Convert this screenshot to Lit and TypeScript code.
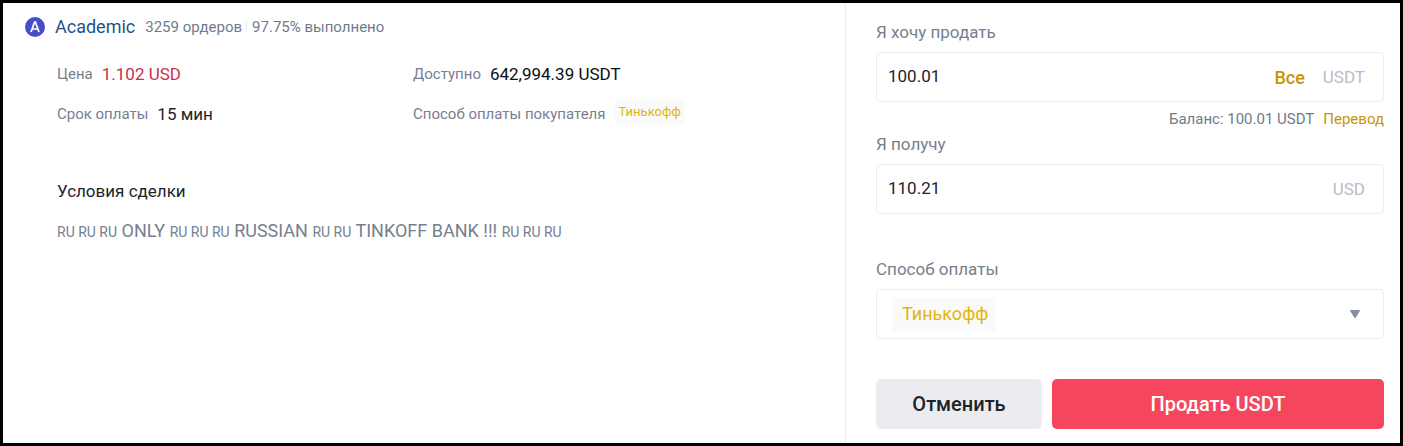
import { LitElement, html, css } from "lit";
import { customElement, state } from "lit/decorators.js";

const TERMS: { text: string; flag?: boolean }[] = [
  { text: "RU RU RU", flag: true },
  { text: "ONLY" },
  { text: "RU RU RU", flag: true },
  { text: "RUSSIAN" },
  { text: "RU RU", flag: true },
  { text: "TINKOFF BANK !!!" },
  { text: "RU RU RU", flag: true },
];

@customElement("offer-details")
export class OfferDetails extends LitElement {
  static styles = css`
    :host { display: block; padding: 12px 24px 24px 22px; }
    .head { display: flex; align-items: center; height: 24px; }
    .avatar { width: 20px; height: 20px; flex: none; margin-right: 10px; }
    .name { font-size: 18px; line-height: 24px; color: #1f5288; text-decoration: none; margin-right: 10px; }
    .stat { font-size: 15px; line-height: 24px; color: #707a8a; }
    .stat + .stat { display: flex; align-items: center; }
    .stat + .stat::before { content: ""; width: 1px; height: 10px; background: #e3e6ea; margin: 0 5px 0 4px; }
    .body { padding-left: 32px; }
    .facts { display: grid; grid-template-columns: minmax(0, 356fr) minmax(0, 408fr); row-gap: 16px; margin: 23px 0 0; }
    .fact { display: flex; align-items: center; gap: 9px; height: 24px; white-space: nowrap; }
    dt { font-size: 15px; line-height: 24px; color: #76808f; }
    dd { margin: 0; font-size: 17px; line-height: 24px; color: #1e2329; }
    .strong { color: #0b0e11; }
    .price { color: #c9304a; }
    .tag { font-size: 13px; padding: 0 4px; margin-top: -4px; line-height: 26px; background: #fafafa; color: #dfb60d; border-radius: 2px; }
    h2 { margin: 53px 0 16px; font-size: 17px; line-height: 24px; font-weight: 400; color: #1e2329; }
    p { margin: 0; font-size: 18px; line-height: 24px; color: #76808f; }
    .flag { font-size: 14px; }
  `;
  render() {
    return html`
      <div class="head">
        <svg class="avatar" viewBox="0 0 20 20" aria-hidden="true">
          <circle cx="10" cy="10" r="10" fill="#474dc9" />
          <path d="M6 15 9.6 5.2h.8L14 15M7.3 12h5.4" fill="none" stroke="#fff" stroke-width="1.7" />
        </svg>
        <a class="name" href="#academic">Academic</a>
        <span class="stat">3259 ордеров</span><span class="stat">97.75% выполнено</span>
      </div>
      <div class="body">
        <dl class="facts">
          <div class="fact"><dt>Цена</dt><dd class="price">1.102 USD</dd></div>
          <div class="fact"><dt>Доступно</dt><dd class="strong">642,994.39 USDT</dd></div>
          <div class="fact"><dt>Срок оплаты</dt><dd>15 мин</dd></div>
          <div class="fact"><dt>Способ оплаты покупателя</dt><dd class="tag">Тинькофф</dd></div>
        </dl>
        <h2>Условия сделки</h2>
        <p>${TERMS.map((t) => (t.flag ? html`<span class="flag">${t.text}</span> ` : html`${t.text} `))}</p>
      </div>
    `;
  }
}

@customElement("sell-form")
export class SellForm extends LitElement {
  static styles = css`
    :host { display: block; padding: 17px 16px 14px 30px; border-left: 1px solid #eaecef; }
    * { box-sizing: border-box; }
    form { margin: 0; }
    .label { display: block; font-size: 17px; line-height: 24px; color: #76808f; margin-bottom: 8px; }
    .field { display: flex; align-items: center; height: 50px; border: 1px solid #eaecef; border-radius: 5px; background: #fff; }
    .field:focus-within { border-color: #f0b90b; }
    input, select, button { font-family: inherit; border: 0; outline: 0; }
    input { flex: 1; min-width: 0; height: 100%; padding: 0 0 2px 11px; font-size: 17px; color: #1e2329; background: none; }
    .all { padding: 0; font-size: 18px; font-weight: 500; color: #c99400; background: none; cursor: pointer; }
    .unit { margin: 0 18px; font-size: 17px; line-height: 24px; color: #b7bdc6; }
    .balance { display: flex; justify-content: flex-end; gap: 9px; margin: 6px 0 2px; font-size: 15px; line-height: 22px; color: #707a8a; }
    .balance a { color: #c99400; text-decoration: none; }
    .pay { margin-top: 43px; }
    .picker { display: grid; align-items: stretch; }
    .picker > * { grid-area: 1 / 1; }
    select {
      appearance: none; width: 100%; height: 48px; padding: 0 40px 2px 25px; font-size: 18px; color: #dfb60d; border-radius: 5px;
      background: linear-gradient(#fafafa, #fafafa) 15px 8px / 104px 33px no-repeat;
    }
    .arrow { width: 10px; height: 8px; margin-right: 23px; align-self: center; justify-self: end; pointer-events: none; }
    .actions { display: grid; grid-template-columns: 1fr 2fr; gap: 10px; margin-top: 40px; }
    .action { height: 50px; border-radius: 5px; font-size: 20px; font-weight: 500; cursor: pointer; }
    .cancel { background: #eaecef; color: #1e2329; }
    .sell { background: #f6465d; color: #fff; }
  `;

  @state() private amount = "100.01";
  @state() private total = "110.21";

  private setAmount(value: string) {
    this.amount = value;
    this.total = (Number(value) * 1.102).toFixed(2);
  }

  render() {
    return html`
      <form @submit=${(e: Event) => e.preventDefault()}>
        <label class="label" for="amount">Я хочу продать</label>
        <div class="field">
          <input id="amount" inputmode="decimal" .value=${this.amount}
            @input=${(e: Event) => this.setAmount((e.target as HTMLInputElement).value)} />
          <button class="all" type="button" @click=${() => this.setAmount("100.01")}>Все</button>
          <span class="unit">USDT</span>
        </div>
        <div class="balance"><span>Баланс: 100.01 USDT</span><a href="#transfer">Перевод</a></div>
        <label class="label" for="total">Я получу</label>
        <div class="field">
          <input id="total" inputmode="decimal" .value=${this.total} />
          <span class="unit">USD</span>
        </div>
        <label class="label pay" for="method">Способ оплаты</label>
        <div class="field picker">
          <select id="method"><option>Тинькофф</option></select>
          <svg class="arrow" viewBox="0 0 10 8" aria-hidden="true"><path d="M1 0h8q1.5 0 .7 1.2L5.8 7.4q-.8 1-1.6 0L.3 1.2Q-.5 0 1 0z" fill="#848e9c" /></svg>
        </div>
        <div class="actions">
          <button class="action cancel" type="button">Отменить</button>
          <button class="action sell" type="submit">Продать USDT</button>
        </div>
      </form>
    `;
  }
}

@customElement("app-root")
export class AppRoot extends LitElement {
  static styles = css`
    :host {
      display: grid;
      grid-template-columns: minmax(0, 842fr) minmax(0, 555fr);
      box-sizing: border-box;
      min-height: 100vh;
      border: 3px solid #000;
      background: #fff;
      font-family: Roboto, "Liberation Sans", sans-serif;
    }
  `;
  render() {
    return html`<offer-details></offer-details><sell-form></sell-form>`;
  }
}
